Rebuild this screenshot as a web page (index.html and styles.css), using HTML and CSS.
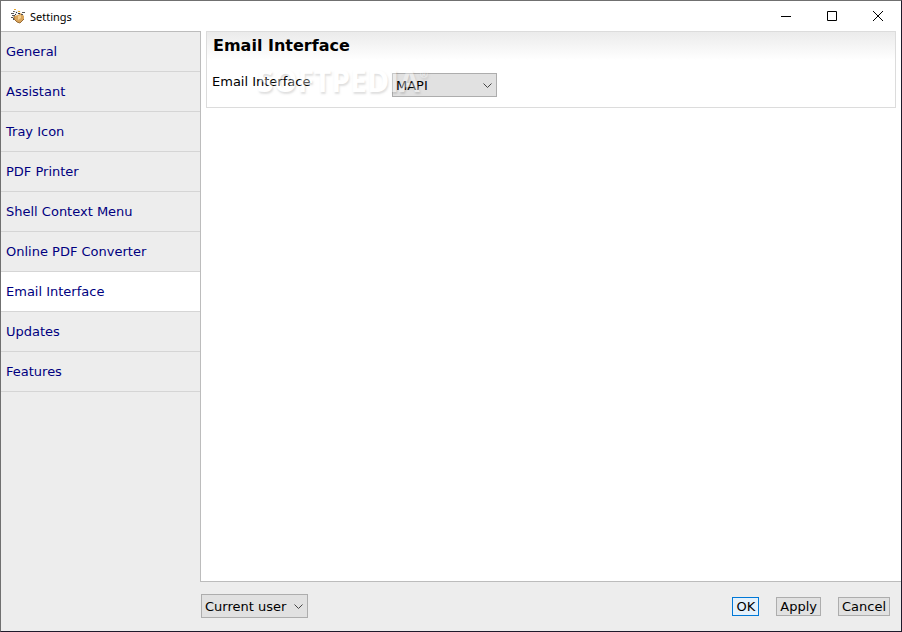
FILE: index.html
```html
<!DOCTYPE html>
<html lang="en">
<head>
    <meta charset="UTF-8">
    <meta name="viewport" content="width=device-width, initial-scale=1.0">
    <title>Settings</title>
    <link rel="stylesheet" href="styles.css">
</head>
<body>

    <div class="window">
        <header class="titlebar">
            <svg class="app-icon" width="16" height="16" viewBox="0 0 16 16">
                <path d="M4 8 L8 7 L11 5 L14 8 L14 11 L10 15 L7 14 L4 11 Z" fill="#d9a55b"/>
                <path d="M8 8 L11 7 L11 10 L8 12 Z" fill="#f4cf91"/>
                <path d="M4 8 L4 11 L7 14 L10 15 L14 11" fill="none" stroke="#9a6c36"/>
                <path d="M1 5h3v1H1z M2 7h3v1H2z M1 9h2v1H1z M3 3h2v1H3z M12 4h3v1h-3z M11 6h2v1h-2z M3 10h1v2H3z" fill="#555"/>
                <path d="M5 3 L9 2 L11 4 L9 6 L6 7 L4 5 Z" fill="#eeeeee"/>
                <path d="M4 1h2v1H4z M8 3h2v1H8z" fill="#e6a52c"/>
                <path d="M6 4h1v1H6z M8 5h2v1H8z M5 6h1v1H5z" fill="#333"/>
            </svg>
            <h1>Settings</h1>
            <div class="window-controls">
                <button type="button" aria-label="Minimize">
                    <svg width="10" height="10" viewBox="0 0 10 10"><path d="M0 5h10v1H0z"/></svg>
                </button>
                <button type="button" aria-label="Maximize">
                    <svg width="10" height="10" viewBox="0 0 10 10"><path d="M.5 .5h9v9h-9z" fill="none" stroke="#000"/></svg>
                </button>
                <button type="button" aria-label="Close">
                    <svg width="10" height="10" viewBox="0 0 10 10"><path d="M0 0L10 10M10 0L0 10" stroke="#000"/></svg>
                </button>
            </div>
        </header>

        <div class="body">
            <nav class="sidebar">
                <a href="#">General</a>
                <a href="#">Assistant</a>
                <a href="#">Tray Icon</a>
                <a href="#">PDF Printer</a>
                <a href="#">Shell Context Menu</a>
                <a href="#">Online PDF Converter</a>
                <a href="#" class="active">Email Interface</a>
                <a href="#">Updates</a>
                <a href="#">Features</a>
            </nav>

            <div class="content">
                <main>
                    <section class="panel">
                        <h2>Email Interface</h2>
                        <div class="row">
                            <label for="email-interface">Email Interface</label>
                            <div class="select-box">
                                <select id="email-interface">
                                    <option>MAPI</option>
                                </select>
                                <svg width="9" height="6" viewBox="0 0 9 6"><path d="M.5 .5L4.5 4.5L8.5 .5"/></svg>
                            </div>
                        </div>
                        <span class="watermark">SOFTPEDIA<sup>®</sup></span>
                    </section>
                </main>

                <footer>
                    <div class="select-box scope">
                        <select aria-label="Apply settings to">
                            <option>Current user</option>
                        </select>
                        <svg width="9" height="6" viewBox="0 0 9 6"><path d="M.5 .5L4.5 4.5L8.5 .5"/></svg>
                    </div>
                    <div class="actions">
                        <button type="button" class="default">OK</button>
                        <button type="button">Apply</button>
                        <button type="button">Cancel</button>
                    </div>
                </footer>
            </div>
        </div>
    </div>

</body>
</html>
```
FILE: styles.css
```css
* {
    box-sizing: border-box;
}

body {
    margin: 0;
    font-family: "DejaVu Sans", Verdana, sans-serif;
    font-size: 13px;
    color: #000;
}

h1, h2 {
    margin: 0;
}

.window {
    display: flex;
    flex-direction: column;
    min-height: 100vh;
    border: 1px solid #1e1a2b;
    border-top-color: #707070;
    border-left-color: #707070;
    background-color: #fff;
}

.titlebar {
    display: flex;
    align-items: center;
    height: 30px;
    padding-left: 9px;
}

.titlebar h1 {
    margin-left: 4px;
    font: 11px "Noto Sans", "Open Sans", sans-serif;
}

.window-controls {
    display: flex;
    margin-left: auto;
}

.window-controls button {
    display: flex;
    align-items: center;
    justify-content: center;
    width: 46px;
    height: 28px;
    padding: 0;
    border: none;
    background: none;
}

.body {
    display: flex;
    flex: 1;
    background-color: #ededed;
}

.sidebar {
    width: 199px;
    border-top: 1px solid #bcbcbc;
}

.sidebar a {
    display: block;
    height: 40px;
    padding-left: 5px;
    border-bottom: 1px solid #d5d5d5;
    line-height: 39px;
    color: #000080;
    text-decoration: none;
}

.sidebar a.active {
    background-color: #fff;
}

.content {
    display: flex;
    flex: 1;
    flex-direction: column;
}

main {
    flex: 1;
    padding: 0 5px;
    border-left: 1px solid #bcbcbc;
    border-bottom: 1px solid #bcbcbc;
    background-color: #fff;
}

.panel {
    position: relative;
    height: 77px;
    padding: 4px 5px;
    border: 1px solid #dcdcdc;
    background: linear-gradient(#ebebeb, #fff 28px);
}

.panel h2 {
    padding-left: 1px;
    font-size: 16px;
    line-height: 20px;
}

.row {
    display: flex;
    margin-top: 17px;
}

.row label {
    width: 180px;
    line-height: 18px;
}

.select-box {
    position: relative;
    width: 105px;
    height: 24px;
}

.select-box.scope {
    width: 107px;
}

.select-box select {
    width: 100%;
    height: 100%;
    padding: 0 3px;
    border: 1px solid #adadad;
    border-radius: 0;
    background-color: #e1e1e1;
    color: #000;
    font: inherit;
    appearance: none;
}

.select-box svg {
    position: absolute;
    top: 10px;
    right: 5px;
    fill: none;
    stroke: #444;
    pointer-events: none;
}

/* sits over the panel contents */
.watermark {
    position: absolute;
    top: 31px;
    left: 50px;
    font: bold 30px/36px "Open Sans", sans-serif;
    color: #fff;
    text-shadow: 1px 2px 2px rgba(0, 0, 0, 0.35);
    opacity: 0.35;
    pointer-events: none;
}

.watermark sup {
    font-size: 10px;
    line-height: 0;
    vertical-align: 14px;
}

footer {
    display: flex;
    align-items: center;
    justify-content: space-between;
    height: 49px;
    padding: 0 11px 1px 1px;
}

.actions {
    display: flex;
    gap: 17px;
    padding-top: 1px;
}

.actions button {
    height: 19px;
    padding: 0 3px;
    border: 1px solid #adadad;
    background-color: #e1e1e1;
    color: #000;
    font: inherit;
    line-height: 17px;
}

.actions button.default {
    border-color: #0078d7;
    background-color: #e5f1fb;
}
```
